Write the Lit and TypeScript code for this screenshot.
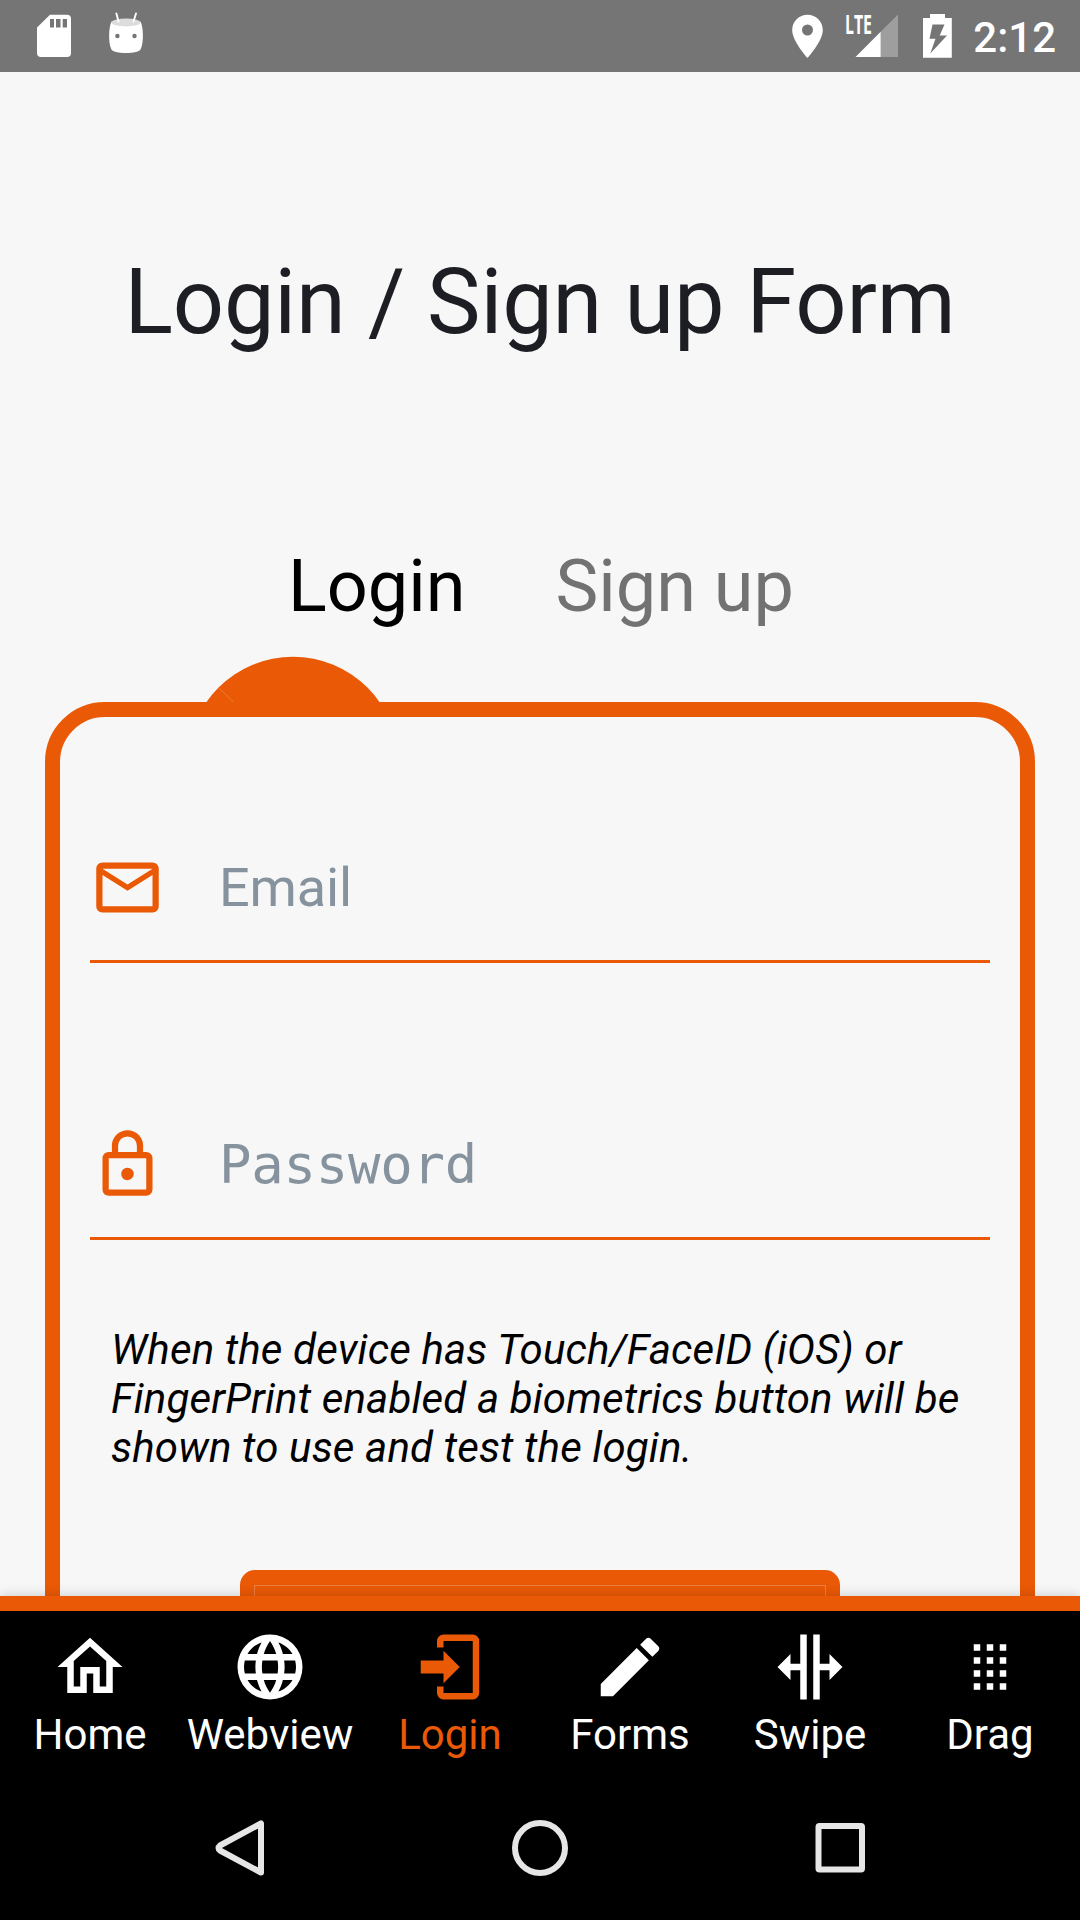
import { LitElement, html, css, svg } from "lit";
import { customElement, property } from "lit/decorators.js";

const ICONS: Record<string, string> = {
  home: "M12 5.69L17 10.19V18H15V12H9V18H7V10.19L12 5.69M12 3L2 12H5V20H11V14H13V20H19V12H22L12 3Z",
  web: "M16.36,14C16.44,13.34 16.5,12.68 16.5,12C16.5,11.32 16.44,10.66 16.36,10H19.74C19.9,10.64 20,11.31 20,12C20,12.69 19.9,13.36 19.74,14M14.59,19.56C15.19,18.45 15.65,17.25 15.97,16H18.92C17.96,17.65 16.43,18.93 14.59,19.56M14.34,14H9.66C9.56,13.34 9.5,12.68 9.5,12C9.5,11.32 9.56,10.65 9.66,10H14.34C14.43,10.65 14.5,11.32 14.5,12C14.5,12.68 14.43,13.34 14.34,14M12,19.96C11.17,18.76 10.5,17.43 10.09,16H13.91C13.5,17.43 12.83,18.76 12,19.96M8,8H5.08C6.03,6.34 7.57,5.06 9.4,4.44C8.8,5.55 8.35,6.75 8,8M5.08,16H8C8.35,17.25 8.8,18.45 9.4,19.56C7.57,18.93 6.03,17.65 5.08,16M4.26,14C4.1,13.36 4,12.69 4,12C4,11.31 4.1,10.64 4.26,10H7.64C7.56,10.66 7.5,11.32 7.5,12C7.5,12.68 7.56,13.34 7.64,14M12,4.03C12.83,5.23 13.5,6.57 13.91,8H10.09C10.5,6.57 11.17,5.23 12,4.03M18.92,8H15.97C15.65,6.75 15.19,5.55 14.59,4.44C16.43,5.07 17.96,6.34 18.92,8M12,2C6.47,2 2,6.5 2,12A10,10 0 0,0 12,22A10,10 0 0,0 22,12A10,10 0 0,0 12,2Z",
  login: "M10,17V14H3V10H10V7L15,12L10,17M10,2H19A2,2 0 0,1 21,4V20A2,2 0 0,1 19,22H10A2,2 0 0,1 8,20V18H10V20H19V4H10V6H8V4A2,2 0 0,1 10,2Z",
  pencil: "M20.71,7.04C21.1,6.65 21.1,6 20.71,5.63L18.37,3.29C18,2.9 17.35,2.9 16.96,3.29L15.12,5.12L18.87,8.87M3,17.25V21H6.75L17.81,9.93L14.06,6.18L3,17.25Z",
  swipe: "M18,16V13H15V22H13V2H15V11H18V8L22,12L18,16M2,12L6,16V13H9V22H11V2H9V11H6V8L2,12Z",
  drag: "M7,19V17H9V19H7M11,19V17H13V19H11M15,19V17H17V19H15M7,15V13H9V15H7M11,15V13H13V15H11M15,15V13H17V15H15M7,11V9H9V11H7M11,11V9H13V11H11M15,11V9H17V11H15M7,7V5H9V7H7M11,7V5H13V7H11M15,7V5H17V7H15Z",
  email: "M22 6C22 4.9 21.1 4 20 4H4C2.9 4 2 4.9 2 6V18C2 19.1 2.9 20 4 20H20C21.1 20 22 19.1 22 18V6M20 6L12 11L4 6H20M20 18H4V8L12 13L20 8V18Z",
  lock: "M12,17C10.89,17 10,16.1 10,15C10,13.89 10.89,13 12,13A2,2 0 0,1 14,15A2,2 0 0,1 12,17M18,20V10H6V20H18M18,8A2,2 0 0,1 20,10V20A2,2 0 0,1 18,22H6C4.89,22 4,21.1 4,20V10C4,8.89 4.89,8 6,8H7V6A5,5 0 0,1 12,1A5,5 0 0,1 17,6V8H18M12,3A3,3 0 0,0 9,6V8H15V6A3,3 0 0,0 12,3Z",
};

@customElement("mdi-icon")
export class MdiIcon extends LitElement {
  @property() name = "home";
  static styles = css`
    :host { display: block; flex: none; }
    .glyph { display: block; width: 100%; height: 100%; fill: currentColor; }
  `;
  render() {
    return html`<svg class="glyph" viewBox="0 0 24 24">${svg`<path d=${ICONS[this.name]}></path>`}</svg>`;
  }
}

@customElement("status-bar")
export class StatusBar extends LitElement {
  static styles = css`
    :host { display: flex; justify-content: space-between; align-items: stretch; height: 72px; background: #757575; color: #fff; }
    .group { display: flex; }
    .pic { display: block; height: 72px; fill: #fff; }
    .time { font: 500 42px/72px Roboto, sans-serif; margin-top: 2px; height: 70px; padding-right: 24px; }
    .lte { font: 700 26px "Open Sans", Roboto, sans-serif; }
  `;
  render() {
    return html`
      <div class="group">
        <svg class="pic" width="160" viewBox="0 0 160 72">
          <path fill-rule="evenodd" d="M50 14.7H67A4 4 0 0 1 71 18.7V53A4 4 0 0 1 67 57H41A4 4 0 0 1 37 53V27.5ZM50 19V27.5H54V19ZM56 19V27.5H60.5V19ZM62.700 19V27.500H67V19Z"></path>
          <path d="M111.500 21.500C117 25 135 25 140.500 21.500C143.500 27 143.800 42 141 48.500C140 52 133 53 126 53C119 53 112 52 111 48.500C108.300 42 108.600 27 111.500 21.500Z"></path>
          <ellipse cx="126" cy="22.500" rx="14.500" ry="3.900" fill="#dcdcdc"></ellipse>
          <path d="M116.400 13.500L118.500 21.500M136 13.500L133.500 21.500" fill="none" stroke="#fff" stroke-width="1.900" stroke-linecap="round"></path>
          <circle cx="117.400" cy="36" r="2.200" fill="#757575"></circle>
          <circle cx="134.500" cy="36" r="2.200" fill="#757575"></circle>
        </svg>
      </div>
      <div class="group">
        <svg class="pic" width="194" viewBox="779 0 194 72">
          <path fill-rule="evenodd" d="M807.500 14.700C799 14.700 792.200 21.500 792.200 30C792.200 41.300 807.500 58 807.500 58S822.800 41.300 822.800 30C822.800 21.500 816 14.700 807.500 14.700ZM807.500 35.500A5.500 5.500 0 1 1 807.500 24.500A5.500 5.500 0 0 1 807.500 35.500Z"></path>
          <path d="M898 14.500V57H880.700V31.800Z" opacity="0.300"></path>
          <path d="M855.500 57L880.700 31.800V57Z"></path>
          <text class="lte" x="845" y="33.500" textLength="27" lengthAdjust="spacingAndGlyphs">LTE</text>
          <path fill-rule="evenodd" d="M930 14H945V18H951.800V57.800H923V18H930ZM932.500 24.500L929.500 38.700H935.500L930.300 53.500L947 35.500H939.700L944.500 24.500Z"></path>
        </svg>
        <span class="time">2:12</span>
      </div>
    `;
  }
}

@customElement("form-field")
export class FormField extends LitElement {
  @property() icon = "email";
  @property() label = "";
  @property({ type: Boolean, reflect: true }) mono = false;
  static styles = css`
    :host { display: flex; align-items: center; box-sizing: border-box; height: 150px; padding-top: 2px; border-bottom: 3px solid #ea5906; color: #ea5906; }
    .icon { width: 75px; height: 75px; }
    .label { margin-left: 54px; font: 54px/64px Roboto, sans-serif; letter-spacing: -0.15px; color: #86939e; }
    :host([mono]) .label { font-family: "DejaVu Sans Mono", monospace; letter-spacing: -0.25px; }
  `;
  render() {
    return html`<mdi-icon class="icon" name=${this.icon}></mdi-icon><span class="label">${this.label}</span>`;
  }
}

@customElement("tab-bar")
export class TabBar extends LitElement {
  static styles = css`
    :host { display: grid; grid-template-columns: repeat(6, 180px); height: 174px; box-sizing: border-box; border-top: 15px solid #ea5906; background: #000; box-shadow: 0 0 12px rgba(0, 0, 0, 0.2); position: relative; }
    .tab { display: flex; flex-direction: column; align-items: center; padding-top: 17px; color: #fff; }
    .tab.active { color: #ea5906; }
    .icon { width: 78px; height: 78px; }
    .label { font: 42px/50px Roboto, sans-serif; margin-top: 4px; }
  `;
  private tabs = [
    ["home", "Home"], ["web", "Webview"], ["login", "Login"],
    ["pencil", "Forms"], ["swipe", "Swipe"], ["drag", "Drag"],
  ];
  render() {
    return this.tabs.map(([icon, label]) => html`
      <div class="tab ${label === "Login" ? "active" : ""}">
        <mdi-icon class="icon" name=${icon}></mdi-icon>
        <span class="label">${label}</span>
      </div>`);
  }
}

@customElement("app-root")
export class AppRoot extends LitElement {
  static styles = css`
    :host { display: flex; flex-direction: column; width: 1080px; height: 1920px; overflow: hidden; background: #f7f7f7; font-family: Roboto, sans-serif; }
    .screen { flex: none; height: 1524px; overflow: hidden; box-sizing: border-box; padding: 178px 45px 0; }
    .title { margin: 0; font-weight: 400; font-size: 90px; line-height: 106px; letter-spacing: -0.12px; text-align: center; color: #1d1e23; white-space: nowrap; }
    .modes { display: flex; justify-content: center; gap: 90px; margin-top: 189px; padding-left: 2px; font-size: 72px; line-height: 84px; color: #727272; }
    .on { color: #000; }
    .card { position: relative; box-sizing: border-box; margin-top: 73px; height: 1000px; border: 15px solid #ea5906; border-radius: 60px; padding: 96px 30px 0; }
    .bump { position: absolute; left: 135px; top: -61px; display: block; }
    .second { margin-top: 127px; }
    .note { margin: 85px 0 0 21px; font-size: 42px; line-height: 49.1px; letter-spacing: 0.16px; font-style: italic; color: #000; white-space: nowrap; }
    .button { box-sizing: border-box; width: 600px; height: 150px; margin: 98px auto 0; padding: 15px 14px; border-radius: 15px; background: #ea5906; }
    .face { height: 120px; box-sizing: border-box; border: 1px solid #ee7d40; }
    .system { flex: 1; background: #000; }
    .keys { display: block; }
  `;
  render() {
    return html`
      <status-bar></status-bar>
      <main class="screen">
        <h1 class="title">Login / Sign up Form</h1>
        <div class="modes"><span class="on">Login</span><span>Sign up</span></div>
        <section class="card">
          <svg class="bump" width="200" height="61" viewBox="195 656 200 61">
            <circle cx="293" cy="762" r="105.300" fill="#ea5906"></circle>
            <path d="M219 688L233.500 702" stroke="#f08a50" stroke-width="0.700"></path>
          </svg>
          <form-field icon="email" label="Email"></form-field>
          <form-field class="second" icon="lock" label="Password" mono></form-field>
          <p class="note">When the device has Touch/FaceID (iOS) or<br>FingerPrint enabled a biometrics button will be<br>shown to use and test the login.</p>
          <div class="button"><div class="face"></div></div>
        </section>
      </main>
      <tab-bar></tab-bar>
      <nav class="system">
        <svg class="keys" width="1080" height="150" viewBox="0 1770 1080 150" fill="none" stroke="#e6e6e6" stroke-width="6" stroke-linejoin="round">
          <path d="M261 1823.500V1872.500L220 1850.500Q217 1848 220 1845.500Z"></path>
          <circle cx="540" cy="1848" r="25"></circle>
          <rect x="818.500" y="1826" width="43.500" height="43.500" rx="1"></rect>
        </svg>
      </nav>
    `;
  }
}
